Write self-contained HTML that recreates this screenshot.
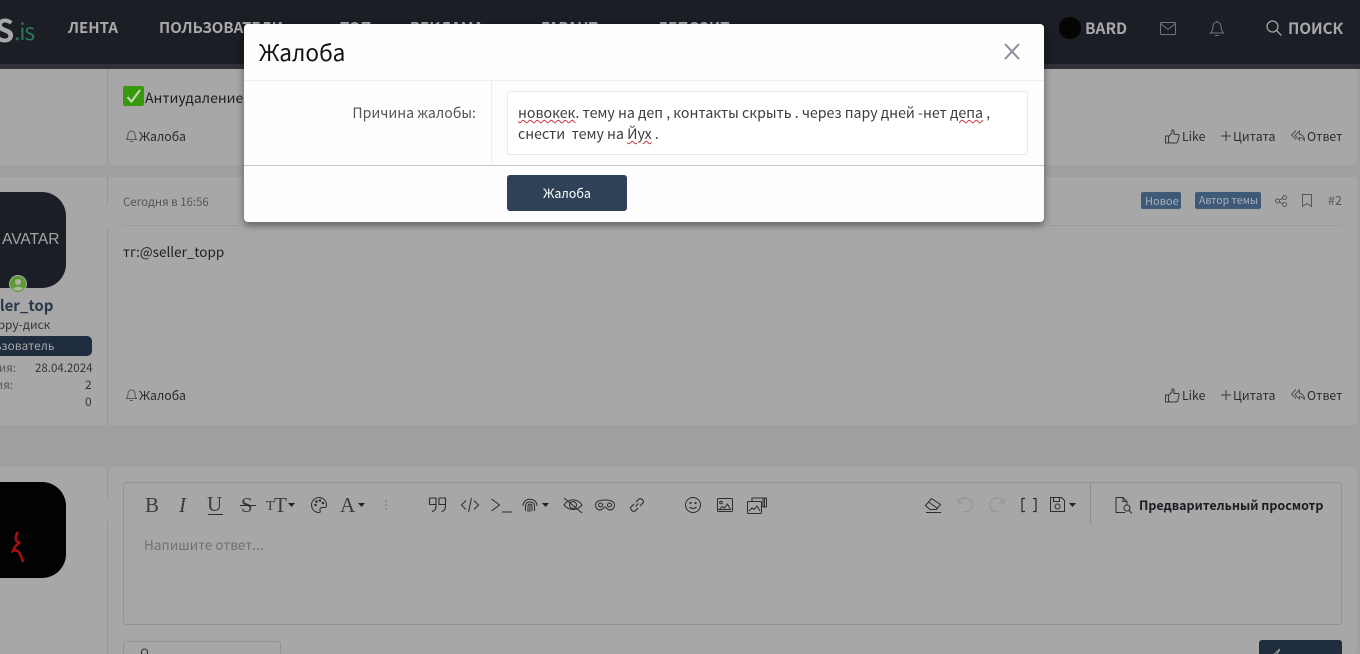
<!DOCTYPE html>
<html lang="ru"><head><meta charset="utf-8"><title>Жалоба</title>
<style>
html,body{margin:0;padding:0;width:1360px;height:654px;overflow:hidden;background:#9fa0a2}
body{position:relative;font-family:"Noto Sans CJK SC","Liberation Sans",sans-serif;color:#1b1d22}
.a,.t{position:absolute}
.t{white-space:nowrap;line-height:20px}
.n{font-weight:700;font-size:15px;color:#a9a9a9}
.p{background:#a7a7a7;position:absolute;left:0;width:1357px;border-radius:0 3px 3px 0}
.vl{position:absolute;left:107px;width:1px;background:#969696}
.s{font-size:12.3px;color:#2a2c30}
.f{font-family:"Liberation Serif",serif;font-size:21px;line-height:22px;color:#3a3b3f}
svg{position:absolute;overflow:visible;fill:none;stroke:#2b2c30;stroke-width:1}
.tri{position:absolute;left:96px;width:12px;height:24px;background:#a7a7a7;clip-path:polygon(100% 0,0 50%,100% 100%)}
.wv{text-decoration:underline wavy #c9323c 1px;text-underline-offset:1px}
</style></head><body>

<div class="a" style="left:0;top:0;width:1360px;height:64px;background:#1b1e25"></div>
<div class="a" style="left:0;top:64px;width:1360px;height:5px;background:#2f3137"></div>
<div class="t" style="left:-5px;top:11px;font-size:31px;line-height:36px;font-weight:700;color:#a9a9a9">S</div>
<div class="t" style="left:14px;top:14px;font-size:23px;line-height:32px;letter-spacing:-1.2px;color:#2c7557">.is</div>
<div class="t n" style="left:68px;top:18px">ЛЕНТА</div>
<div class="t n" style="left:159px;top:18px">ПОЛЬЗОВАТЕЛИ</div>
<div class="t n" style="left:340px;top:18px">ТОП</div>
<div class="t n" style="left:410px;top:18px">РЕКЛАМА</div>
<div class="t n" style="left:541px;top:18px">ГАРАНТ</div>
<div class="t n" style="left:657px;top:18px">ДЕПОЗИТ</div>
<div class="a" style="left:1059px;top:17px;width:22px;height:22px;border-radius:50%;background:#050505"></div>
<div class="t n" style="left:1085px;top:18px;font-size:15.5px">BARD</div>
<svg style="left:1160px;top:22px;stroke:#74767a" width="16" height="13"><rect x=".5" y=".5" width="15" height="12" rx="1"/><path d="M.5 1.5 8 7.5l7.5-6"/></svg>
<svg style="left:1210px;top:20px;stroke:#74767a" width="14" height="17"><path d="M.5 13c1.500-1.500 2.500-3 2.500-7a4 4 0 0 1 8 0c0 4 1 5.500 2.500 7zM5 15.500h4M7 .5v1.500"/></svg>
<svg style="left:1266px;top:20px;stroke:#a0a0a0;stroke-width:1.300" width="16" height="16"><circle cx="6.500" cy="6.500" r="5.500"/><path d="m10.500 10.500 5 5"/></svg>
<div class="t n" style="left:1288px;top:18px;font-size:15.2px">ПОИСК</div>

<!-- post 1 -->
<div class="p" style="top:69px;height:96px"></div>
<div class="vl" style="top:69px;height:96px"></div>
<div class="a" style="left:123px;top:86px;width:21px;height:20px;border-radius:2px;background:#379a0c"></div>
<svg style="left:126px;top:89px;stroke:#c9d8c0;stroke-width:2" width="15" height="14"><path d="m1.500 8 4 4.500L14 1"/></svg>
<div class="t" style="left:145px;top:88px;font-size:14px;color:#1d1f23">Антиудаление</div>
<svg style="left:126px;top:130px;stroke:#55575b" width="11" height="13"><path d="M.5 9.500c1-1 1.500-2 1.500-5a3.500 3.500 0 0 1 7 0c0 3 .5 4 1.500 5zM4 11.500h3"/></svg>
<div class="t s" style="left:139px;top:126px">Жалоба</div>
<svg style="left:1165px;top:129px;stroke:#36383c" width="15" height="15"><path d="M.5 7h3v7h-3zM3.500 7.500 7 4V1c1.500-.5 2.500 1 2 2.500L9 5.500h4c1 0 1.500 1 1 2l-1.500 5.500c-.2.700-.8 1-1.500 1H5l-1.500-1"/></svg>
<div class="t s" style="left:1182px;top:126px">Like</div>
<svg style="left:1221px;top:131px;stroke:#36383c" width="10" height="10"><path d="M5 0v10M0 5h10"/></svg>
<div class="t s" style="left:1233px;top:126px">Цитата</div>
<svg style="left:1291px;top:130px;stroke:#4a4c50;stroke-width:.9" width="14" height="12"><path d="M5 .5.500 5 5 9.500M8.500 1 4 5.500 8.500 10V7.500c2 0 3.500 1 5 3 0-3.500-2-6-5-6z"/></svg>
<div class="t s" style="left:1307px;top:126px">Ответ</div>

<!-- post 2 -->
<div class="p" style="top:177px;height:248px"></div>
<div class="vl" style="top:177px;height:248px"></div>
<div class="tri" style="top:205px"></div>
<div class="a" style="left:-30px;top:192px;width:96px;height:96px;border-radius:24px;background:#1b1e25"></div>
<div class="t" style="left:2px;top:230px;font-size:15.5px;color:#a3a4a6;font-family:'Liberation Sans',sans-serif">AVATAR</div>
<svg style="left:9px;top:275px;stroke:none" width="18" height="18"><circle cx="9" cy="9" r="9" fill="#a7a7a7"/><circle cx="9" cy="9" r="8" fill="#5f9a38"/><circle cx="9" cy="7" r="3" fill="#a9b5a0"/><path d="M3.800 14c1-3 9.400-3 10.400 0-2.800 2.300-7.600 2.300-10.400 0z" fill="#a9b5a0"/></svg>
<div class="t" style="left:-21px;top:296px;font-size:15px;font-weight:700;color:#29384a">seller_top</div>
<div class="t" style="left:-17px;top:315px;font-size:12px;color:#33353a">floppy-диск</div>
<div class="a" style="left:-20px;top:336px;width:112px;height:20px;border-radius:5px;background:#1f2d3e"></div>
<div class="t" style="left:-28px;top:336px;font-size:12px;color:#a6a6a6">Пользователь</div>
<div class="t" style="right:1344px;top:358px;font-size:11.5px;color:#55575a">Регистрация:</div>
<div class="t" style="left:35px;top:358px;font-size:11.5px;color:#33353a">28.04.2024</div>
<div class="t" style="right:1347px;top:375px;font-size:11.5px;color:#55575a">Сообщения:</div>
<div class="t" style="left:85px;top:375px;font-size:12px;color:#33353a">2</div>
<div class="t" style="left:85px;top:392px;font-size:12px;color:#33353a">0</div>
<div class="t" style="left:123px;top:192px;font-size:11.4px;color:#55575b">Сегодня в 16:56</div>
<div class="a" style="left:123px;top:225px;width:1219px;height:1px;background:#9c9c9c"></div>
<div class="a" style="left:1141px;top:192px;width:40px;height:17px;border-radius:2px;background:#3e5a78"></div>
<div class="t" style="left:1145px;top:191px;font-size:11px;color:#a9b0b8">Новое</div>
<div class="a" style="left:1195px;top:192px;width:66px;height:17px;border-radius:2px;background:#3e5a78"></div>
<div class="t" style="left:1199px;top:191px;font-size:10.5px;color:#a9b0b8">Автор темы</div>
<svg style="left:1275px;top:195px;stroke:#55575b" width="12" height="12"><circle cx="2.500" cy="6" r="2"/><circle cx="9.500" cy="2.500" r="2"/><circle cx="9.500" cy="9.500" r="2"/><path d="m4.300 5 3.400-1.600M4.300 7l3.400 1.600"/></svg>
<svg style="left:1302px;top:194px;stroke:#55575b" width="10" height="13"><path d="M.5.500h9v12L5 9.500.5 12.500z"/></svg>
<div class="t" style="left:1328px;top:190px;font-size:12.5px;color:#55575b">#2</div>
<div class="t" style="left:123px;top:241px;font-size:13.5px;color:#1d1f23">тг:@seller_topp</div>
<svg style="left:126px;top:389px;stroke:#55575b" width="11" height="13"><path d="M.5 9.500c1-1 1.500-2 1.500-5a3.500 3.500 0 0 1 7 0c0 3 .5 4 1.500 5zM4 11.500h3"/></svg>
<div class="t s" style="left:139px;top:385px">Жалоба</div>
<svg style="left:1165px;top:388px;stroke:#36383c" width="15" height="15"><path d="M.5 7h3v7h-3zM3.500 7.500 7 4V1c1.500-.5 2.500 1 2 2.500L9 5.500h4c1 0 1.500 1 1 2l-1.500 5.500c-.2.700-.8 1-1.500 1H5l-1.500-1"/></svg>
<div class="t s" style="left:1182px;top:385px">Like</div>
<svg style="left:1221px;top:390px;stroke:#36383c" width="10" height="10"><path d="M5 0v10M0 5h10"/></svg>
<div class="t s" style="left:1233px;top:385px">Цитата</div>
<svg style="left:1291px;top:389px;stroke:#4a4c50;stroke-width:.9" width="14" height="12"><path d="M5 .5.500 5 5 9.500M8.500 1 4 5.500 8.500 10V7.500c2 0 3.500 1 5 3 0-3.500-2-6-5-6z"/></svg>
<div class="t s" style="left:1307px;top:385px">Ответ</div>

<!-- reply -->
<div class="p" style="top:467px;height:187px"></div>
<div class="vl" style="top:467px;height:187px"></div>
<div class="tri" style="top:498px"></div>
<div class="a" style="left:-30px;top:482px;width:96px;height:96px;border-radius:24px;background:#020202"></div>
<svg style="left:10px;top:530px;stroke:#a80f12;stroke-width:2.500" width="16" height="36"><path d="M8 2c-4 6-2 11 2 10-4 3-6 6-7 9 4-2 7 0 10 11"/></svg>
<div class="a" style="left:123px;top:482px;width:1217px;height:141px;border:1px solid #939393;border-radius:3px"></div>
<div class="a" style="left:1090px;top:483px;width:1px;height:41px;background:#8c8c8c"></div>
<div class="a" style="left:1091px;top:523px;width:250px;height:1px;background:#a2a2a2"></div>
<div class="t" style="left:144px;top:534px;font-size:13.5px;color:#717171">Напишите ответ...</div>

<!-- toolbar -->
<div class="t f" style="left:145px;top:494px">B</div>
<div class="t f" style="left:179px;top:494px;font-style:italic">I</div>
<div class="t f" style="left:207px;top:493px">U</div>
<div class="a" style="left:208px;top:514px;width:15px;height:1px;background:#2b2c30"></div>
<div class="t f" style="left:241px;top:494px">S</div>
<div class="a" style="left:240px;top:505px;width:16px;height:1px;background:#2b2c30"></div>
<div class="t f" style="left:266px;top:498px;font-size:14px;line-height:18px">T</div>
<div class="t f" style="left:274px;top:494px">T</div>
<svg style="left:288px;top:503px;stroke:none;fill:#222" width="7" height="4"><path d="M0 0h7L3.500 4z"/></svg>
<svg style="left:311px;top:497px" width="16" height="16"><path d="M8 .5a7.500 7.500 0 1 0 0 15c1.500 0 1.500-1 1-2-.5-1.500.5-3 2-3h2.500c1.500 0 2-1 2-2.500C15.500 3.500 12 .5 8 .5z"/><circle cx="4.500" cy="8" r=".8"/><circle cx="5.500" cy="4.500" r=".8"/><circle cx="9" cy="3.500" r=".8"/><circle cx="12" cy="6" r=".8"/></svg>
<div class="t f" style="left:340px;top:494px">A</div>
<svg style="left:358px;top:503px;stroke:none;fill:#222" width="7" height="4"><path d="M0 0h7L3.500 4z"/></svg>
<svg style="left:385px;top:500px;stroke:#6d6d6d" width="2" height="10"><path d="M1 0v2M1 4v2M1 8v2"/></svg>
<svg style="left:429px;top:497px;stroke-width:1.100" width="17" height="16"><path d="M.5 1h6.500v8c0 3-1.500 5-4 5.500M.5 1v6.500h6.500M10 1h6.500v8c0 3-1.500 5-4 5.500M10 1v6.500h6.500"/></svg>
<svg style="left:461px;top:497px" width="18" height="16"><path d="M5 3.500.5 8 5 12.500M13 3.500 17.500 8 13 12.500M10.500 1 7.500 15"/></svg>
<svg style="left:491px;top:498px" width="21" height="15"><path d="m.5 1 8 6-8 6M11 14h10"/></svg>
<svg style="left:522px;top:497px" width="16" height="16"><path d="M1 9c0-9 14-9 14 0M3.500 14V9c0-5.500 9-5.500 9 0v5M6 15V9c0-2.500 4-2.500 4 0v5M8 8v7"/></svg>
<svg style="left:542px;top:503px;stroke:none;fill:#222" width="7" height="4"><path d="M0 0h7L3.500 4z"/></svg>
<svg style="left:563px;top:497px" width="20" height="16"><path d="M1 1l18 15M1 8c5-7 13-7 18 0-5 6-13 6-18 0z"/><circle cx="10" cy="8" r="3.500"/></svg>
<svg style="left:595px;top:499px" width="20" height="12"><path d="M.5 6c0-3 3-5 9.500-5s9.500 2 9.500 5c0 3-2 5-4.500 5-3 0-3-3-5-3s-2 3-5 3C2.500 11 .5 9 .5 6z"/><circle cx="5.500" cy="6" r="2"/><circle cx="14.500" cy="6" r="2"/></svg>
<svg style="left:629px;top:497px;stroke-width:1.100" width="16" height="16"><path d="m6.500 9.500 3-3M5 7 2 10a3 3 0 0 0 4 4l3-3M11 9l3-3a3 3 0 0 0-4-4L7 5"/></svg>
<svg style="left:685px;top:497px" width="16" height="16"><circle cx="8" cy="8" r="7.500"/><circle cx="5.500" cy="6" r=".6"/><circle cx="10.500" cy="6" r=".6"/><path d="M4.500 10c2 2 5 2 7 0"/></svg>
<svg style="left:717px;top:498px" width="16" height="14"><rect x=".5" y=".5" width="15" height="13" rx="1"/><circle cx="4" cy="4.500" r="1.300"/><path d="m2 11.500 3.500-3 2 1.500 3-4 3 5.500z"/></svg>
<svg style="left:747px;top:497px" width="20" height="17"><rect x=".5" y="4.500" width="14" height="12" rx="1"/><path d="m2 14 3-3 2 1.500 3-3.500 3 5M5 4.500V1h11v8.500h-1.500M16 1h3.500v9H16M17.500 1v9"/></svg>
<svg style="left:925px;top:497px" width="17" height="16"><path d="m6.500 1.500 9 6-4 5H5L.5 8.500zM3.500 5l8.500 6M1 15.500h15"/></svg>
<svg style="left:957px;top:497px;stroke:#919191" width="16" height="16"><path d="M1 1v5h5M1.500 6A7 7 0 1 1 6 14.500"/></svg>
<svg style="left:989px;top:497px;stroke:#919191" width="16" height="16"><path d="M15 1v5h-5M14.500 6A7 7 0 1 0 10 14.500"/></svg>
<svg style="left:1021px;top:498px;stroke:#2e2236;stroke-width:1.200" width="16" height="14"><path d="M4 .5H1v13h3M12 .5h3v13h-3"/></svg>
<svg style="left:1050px;top:497px" width="15" height="15"><path d="M.5.500h11l3 3v11H.5zM3.500.5v4h6v-4"/><circle cx="7.500" cy="9.500" r="2.500"/></svg>
<svg style="left:1069px;top:503px;stroke:none;fill:#222" width="7" height="4"><path d="M0 0h7L3.500 4z"/></svg>
<svg style="left:1115px;top:497px" width="18" height="17"><path d="M10 15.500H1V.5h7l4 4v3M8 .5v4h4"/><circle cx="12" cy="11" r="3"/><path d="m14 13.500 3 3"/></svg>
<div class="t" style="left:1139px;top:495px;font-size:12.5px;font-weight:700;color:#1b1d22">Предварительный просмотр</div>

<!-- bottom controls -->
<div class="a" style="left:123px;top:641px;width:156px;height:20px;border:1px solid #939393;border-radius:3px"></div>
<svg style="left:140px;top:648px;stroke:#2a2c30" width="10" height="12"><path d="M1.500 10V4a3 3 0 0 1 6 0v8"/></svg>
<div class="t" style="left:145px;top:651px;font-size:13px;color:#2a2c30">Прикрепить файлы</div>
<div class="a" style="left:1259px;top:640px;width:83px;height:20px;border-radius:3px;background:#1f2d3e"></div>
<svg style="left:1271px;top:649px;stroke:#a6a6a6" width="10" height="8"><path d="M9 0 1 7h4z"/></svg>

<!-- modal -->
<div class="a" style="left:244px;top:24px;width:800px;height:198px;background:#fdfdfd;border-radius:4px;box-shadow:0 3px 8px rgba(0,0,0,.45);overflow:hidden">
  <div class="t" style="left:15px;top:10px;font-size:22.6px;line-height:36px;color:#141414">Жалоба</div>
  <svg style="left:761px;top:20px;stroke:#8b8f98;stroke-width:2" width="14" height="15"><path d="m0 0 14 15M14 0 0 15"/></svg>
  <div class="a" style="left:0;top:56px;width:800px;height:1px;background:#eeeeee"></div>
  <div class="a" style="left:247px;top:57px;width:1px;height:84px;background:#eeeeee"></div>
  <div class="t" style="right:568px;top:79px;font-size:14.15px;color:#555">Причина жалобы:</div>
  <div class="a" style="left:263px;top:67px;width:519px;height:62px;border:1px solid #e9e9e9;border-radius:3px;background:#fff"></div>
  <div class="t" style="left:274px;top:79px;font-size:14.17px;color:#3d3d3d;white-space:pre"><span class="wv">новокек</span>. тему на деп , контакты скрыть . через пару дней -нет <span class="wv">депа</span> ,</div>
  <div class="t" style="left:274px;top:100px;font-size:14.17px;color:#3d3d3d;white-space:pre">снести  тему на <span class="wv">Йух</span> .</div>
  <div class="a" style="left:0;top:141px;width:800px;height:1px;background:#c9c9c9"></div>
  <div class="a" style="left:263px;top:151px;width:120px;height:36px;border-radius:3px;background:#2e4156"></div>
  <div class="t" style="left:263px;width:120px;text-align:center;top:159px;font-size:12.5px;color:#fff">Жалоба</div>
</div>
</body></html>
